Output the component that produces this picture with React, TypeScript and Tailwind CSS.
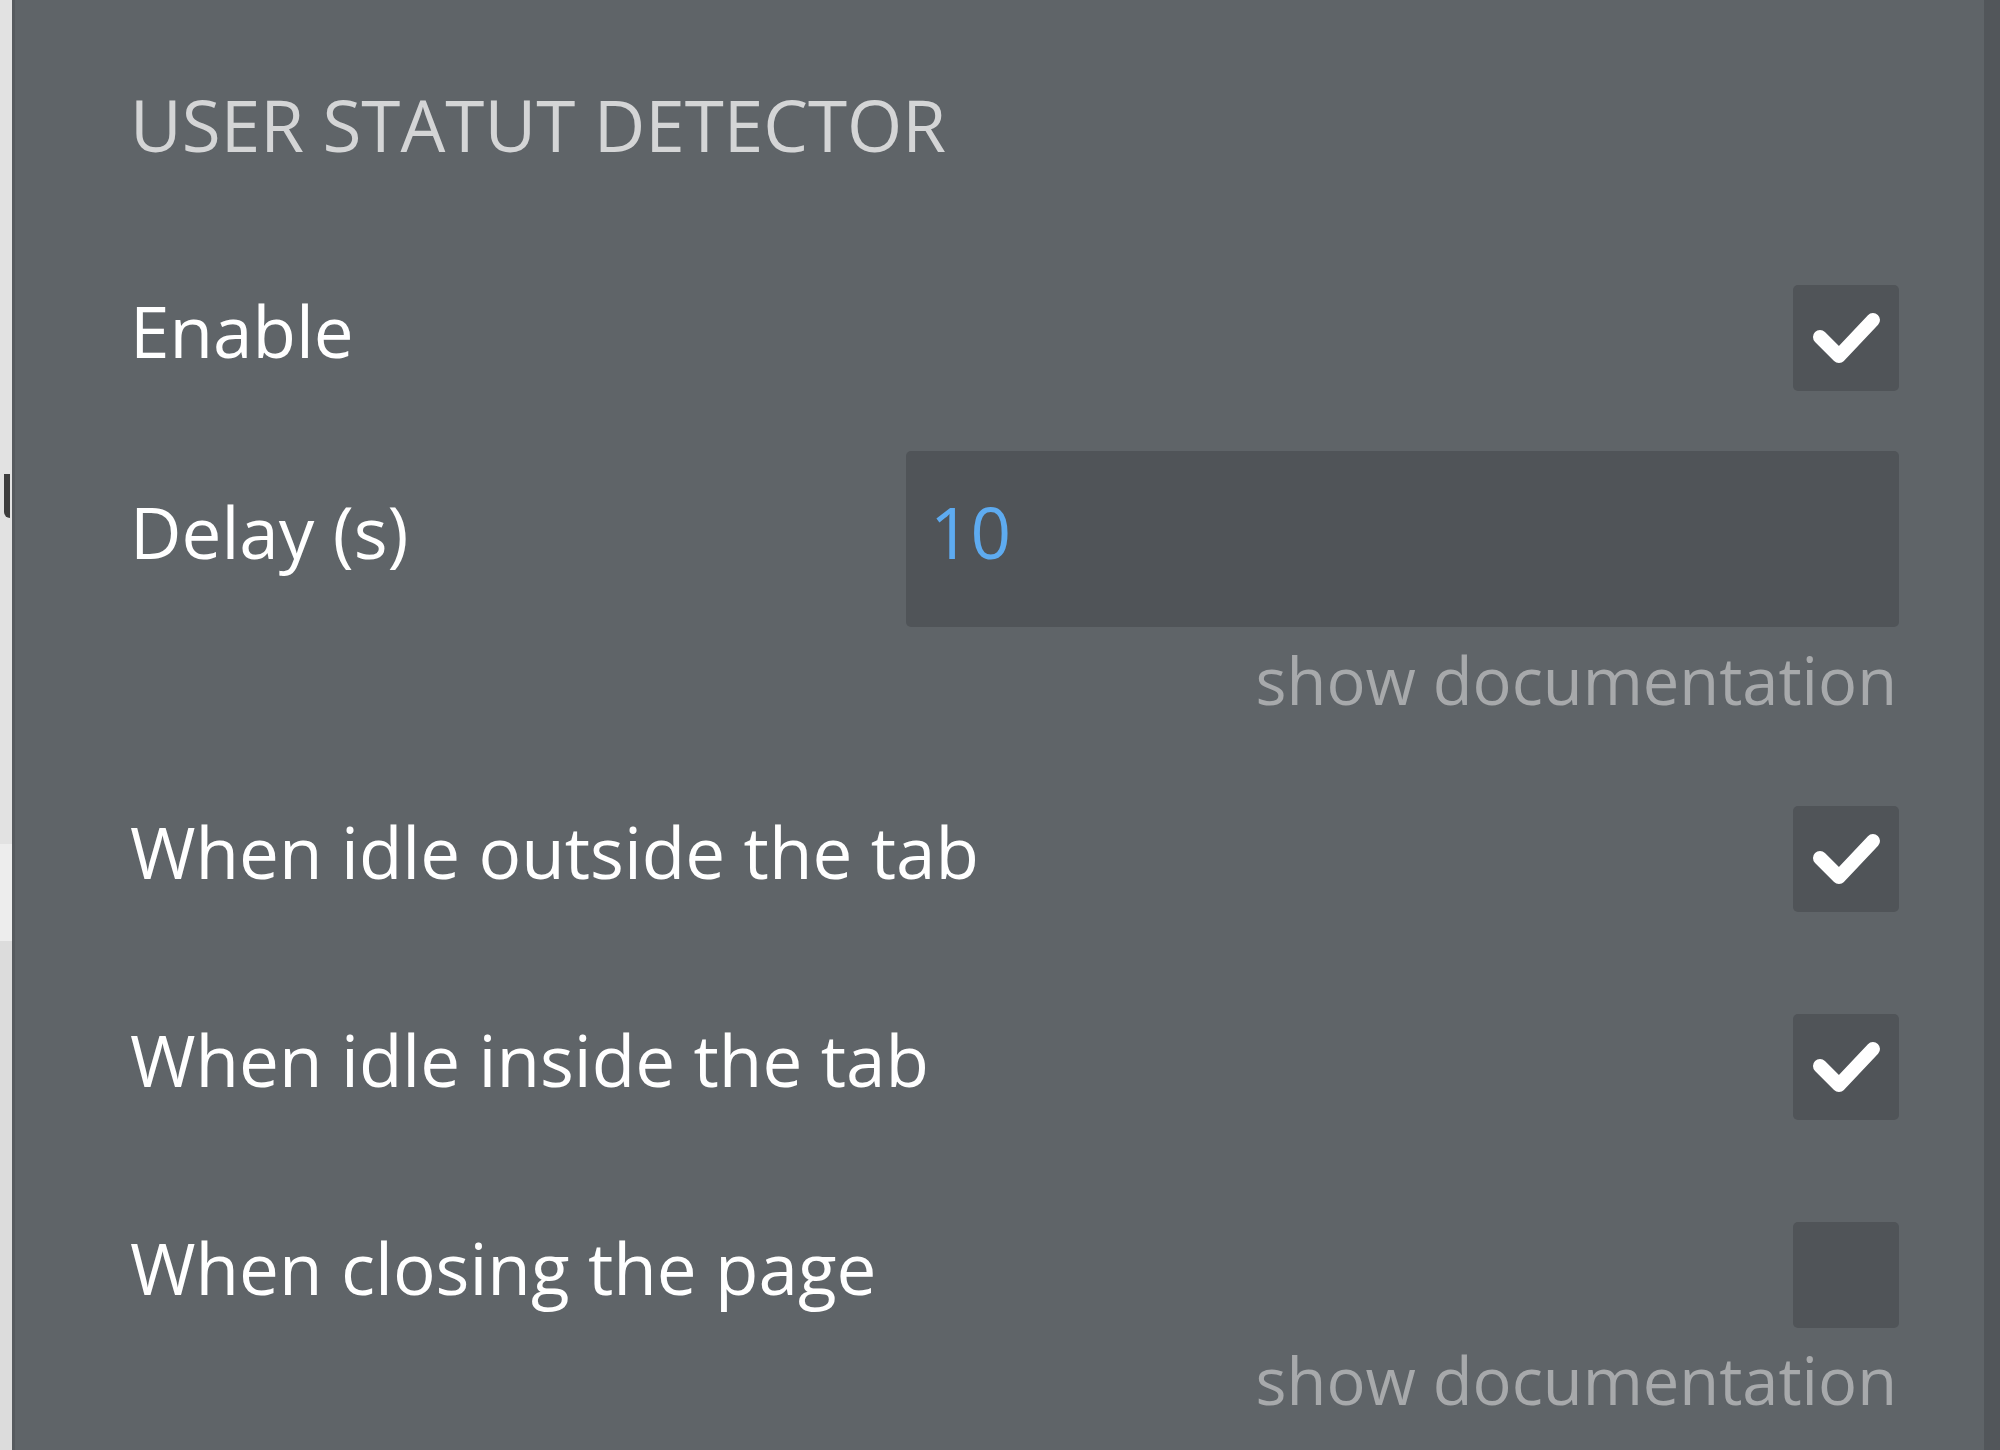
import { ReactNode } from "react"

interface CheckboxProps {
    checked: boolean
}

function Checkbox({ checked }: CheckboxProps) {
    return (
        <div className="w-[106px] h-[106px] shrink-0 rounded-[5px] bg-[#505458] flex items-center justify-center">
            {checked && (
                <svg width="106" height="106" viewBox="0 0 106 106" fill="none">
                    <polyline points="27,52 46,71 80,35" stroke="#ffffff" strokeWidth="14" strokeLinecap="round" strokeLinejoin="round" />
                </svg>
            )}
        </div>
    )
}

interface RowProps {
    label: string
    children: ReactNode
    className?: string
}

function Row({ label, children, className }: RowProps) {
    return (
        <div className={`flex items-center justify-between ${className ?? ""}`}>
            <span className="text-white pb-[16px]">{label}</span>
            {children}
        </div>
    )
}

function DocLink({ className }: { className?: string }) {
    return (
        <div className={`flex justify-end h-[72px] leading-[72px] text-[65px] text-[#a7a9ab] pr-[2px] ${className ?? ""}`}>
            show documentation
        </div>
    )
}

export default function App() {
    return (
        <div className="flex w-full h-[1450px] overflow-hidden text-[71px] leading-none font-['Open_Sans',sans-serif]">
            {/* bit of the page behind the panel */}
            <div className="w-[12px] shrink-0 flex flex-col bg-[#e2e2e2]">
                <div className="h-[44px] mt-[474px] flex items-start">
                    <div className="w-[6px] h-[44px] ml-[4px] rounded-bl-[8px] bg-[#3d3d3d]" />
                </div>
                <div className="h-[326px]" />
                <div className="h-[97px] bg-[#ededed]" />
                <div className="flex-1 bg-[#dcdcdc]" />
            </div>
            <div className="w-[3px] shrink-0 bg-[#565a5e]" />

            <div className="flex-1 flex flex-col bg-[#5f6468] pl-[115px] pr-[85px] pt-[89px]">
                <h1 className="h-[72px] text-[#d4d5d6]">USER STATUT DETECTOR</h1>

                <Row label="Enable" className="mt-[124px]">
                    <Checkbox checked={true} />
                </Row>

                <Row label="Delay (s)" className="mt-[60px]">
                    <div className="w-[993px] h-[176px] rounded-[5px] bg-[#505458] flex items-center pl-[24px] pb-[16px] text-[#5eabf0]">
                        10
                    </div>
                </Row>
                <DocLink className="mt-[17px]" />

                <Row label="When idle outside the tab" className="mt-[90px]">
                    <Checkbox checked={true} />
                </Row>
                <Row label="When idle inside the tab" className="mt-[102px]">
                    <Checkbox checked={true} />
                </Row>
                <Row label="When closing the page" className="mt-[102px]">
                    <Checkbox checked={false} />
                </Row>
                <DocLink className="mt-[16px]" />
            </div>

            <div className="w-[16px] shrink-0 bg-[#52565a]" />
        </div>
    )
}
